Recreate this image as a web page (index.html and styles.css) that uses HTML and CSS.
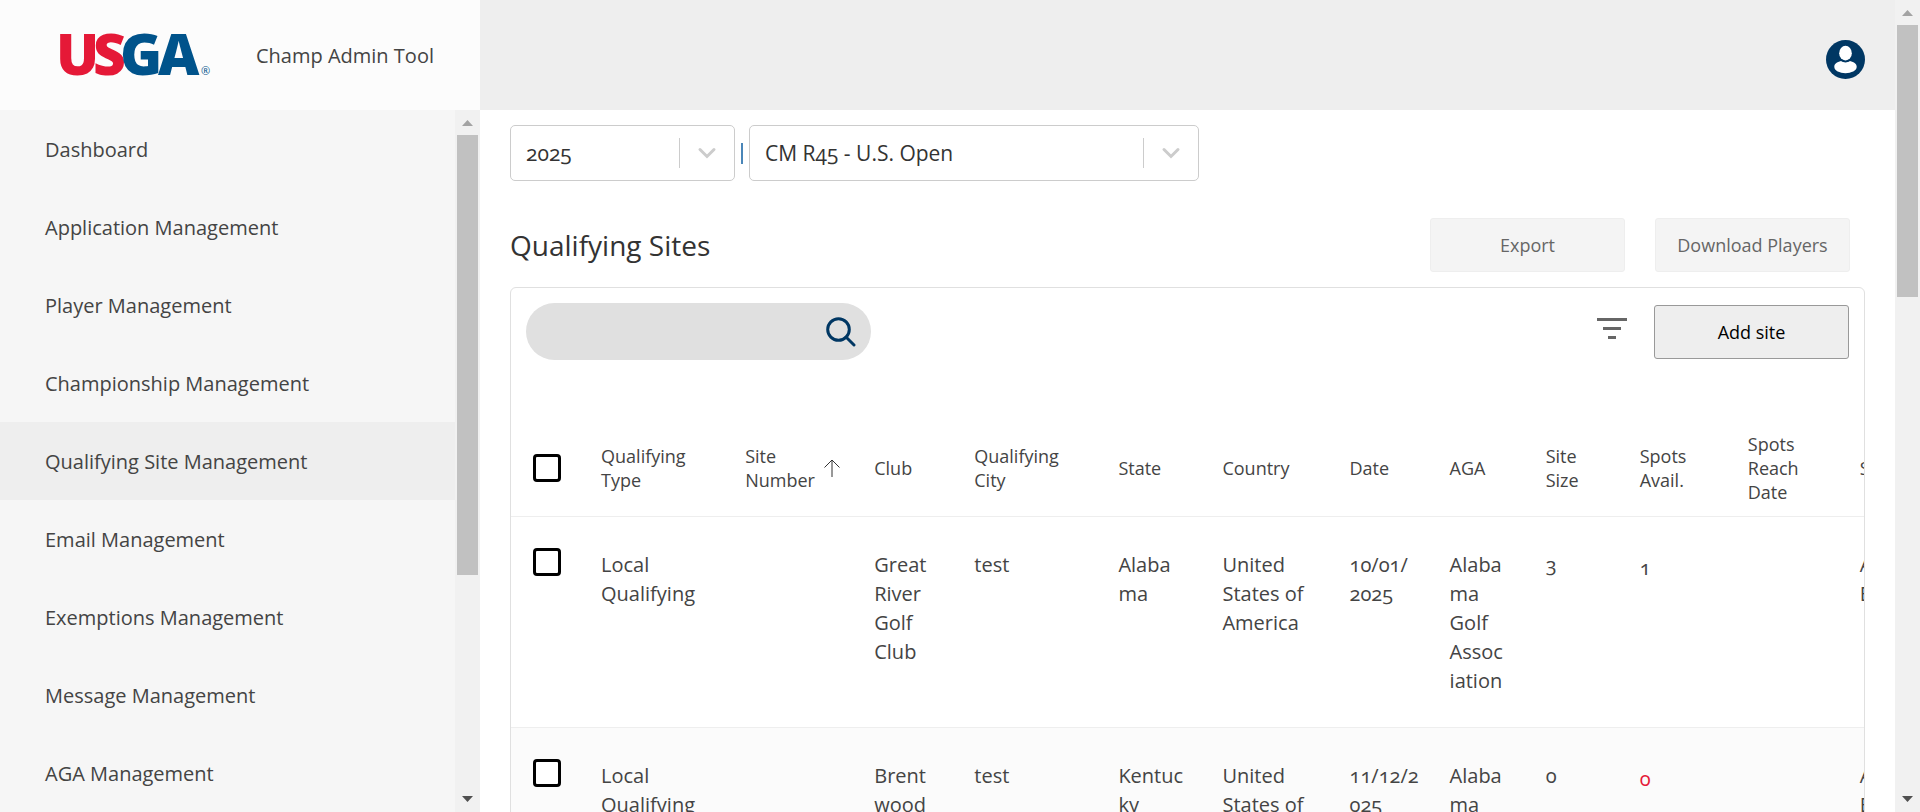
FILE: index.html
```html
<!DOCTYPE html>
<html lang="en">
<head>
<meta charset="utf-8">
<meta name="viewport" content="width=device-width, initial-scale=1">
<title>Champ Admin Tool</title>
<link rel="stylesheet" href="styles.css">
</head>
<body>
<div class="app">
  <aside class="side">
    <div class="brand">
      <svg class="logo" viewBox="0 0 154 46" role="img" aria-label="USGA">
        <text x="-4 33 60 98" y="43"><tspan class="logo-red">US</tspan><tspan class="logo-blue">GA</tspan></text>
        <text class="logo-mark" x="141" y="43">®</text>
      </svg>
      <span class="brand-name">Champ Admin Tool</span>
    </div>
    <div class="side-body">
      <nav class="menu">
        <a href="#">Dashboard</a>
        <a href="#">Application Management</a>
        <a href="#">Player Management</a>
        <a href="#">Championship Management</a>
        <a href="#" class="active" aria-current="page">Qualifying Site Management</a>
        <a href="#">Email Management</a>
        <a href="#">Exemptions Management</a>
        <a href="#">Message Management</a>
        <a href="#">AGA Management</a>
      </nav>
      <div class="scrollbar" aria-hidden="true">
        <svg class="arrow up" viewBox="0 0 25 25"><path d="M7 16L12.500 10L18 16Z"/></svg>
        <div class="track"><div class="thumb thumb-side"></div></div>
        <svg class="arrow" viewBox="0 0 25 25"><path d="M7 9L18 9L12.500 15Z"/></svg>
      </div>
    </div>
  </aside>

  <div class="page">
    <header class="topbar">
      <button class="account" aria-label="Account">
        <svg viewBox="0 0 40 40"><circle cx="20" cy="20" r="20" fill="#003763"/><path d="M15.500 21.500C11 22.500 8.500 24.500 8.500 27.500C8.500 31.500 14 34 20 34S31.500 31.500 31.500 27.500C31.500 24.500 29 22.500 24.500 21.500C22 23.500 18 23.500 15.500 21.500Z" fill="#fff"/><ellipse cx="20" cy="13.500" rx="6.500" ry="7.500" fill="#fff"/></svg>
      </button>
    </header>
    <main class="content">
      <div class="filters">
        <div class="picker picker-year">
          <select aria-label="Year"><option>2025</option></select>
          <span class="rule"></span>
          <svg class="chevron" viewBox="0 0 20 20"><path d="M3 6.500L10 13.500L17 6.500"/></svg>
        </div>
        <span class="divider"></span>
        <div class="picker picker-event">
          <select aria-label="Championship"><option>CM R45 - U.S. Open</option></select>
          <span class="rule"></span>
          <svg class="chevron" viewBox="0 0 20 20"><path d="M3 6.500L10 13.500L17 6.500"/></svg>
        </div>
      </div>

      <div class="heading">
        <h1>Qualifying Sites</h1>
        <button class="btn" disabled>Export</button>
        <button class="btn" disabled>Download Players</button>
      </div>

      <section class="card">
        <div class="tools">
          <div class="search">
            <input type="text" aria-label="Search">
            <button aria-label="Search"><svg viewBox="0 0 30 30"><circle cx="12.500" cy="12.500" r="10.800"/><path d="M20 20L28 28"/></svg></button>
          </div>
          <button class="filter" aria-label="Filter"><svg viewBox="0 0 30 21"><path d="M0 1.500H30M6 10.500H24M11 19.500H19"/></svg></button>
          <button class="btn primary">Add site</button>
        </div>
        <table class="sites">
          <colgroup>
            <col class="w-check"><col class="w-144"><col class="w-129"><col class="w-100"><col class="w-144"><col class="w-104"><col class="w-127"><col class="w-100"><col class="w-96"><col class="w-94"><col class="w-108"><col class="w-112"><col class="w-144">
          </colgroup>
          <thead>
            <tr>
              <th><input type="checkbox" aria-label="Select all"></th>
              <th>Qualifying<br>Type</th>
              <th><span class="sorted"><span>Site<br>Number</span><svg viewBox="0 0 18 20"><path d="M9 19V2M1.500 9.500L9 2L16.500 9.500"/></svg></span></th>
              <th>Club</th><th>Qualifying<br>City</th><th>State</th><th>Country</th><th>Date</th><th>AGA</th>
              <th>Site<br>Size</th><th>Spots<br>Avail.</th><th>Spots<br>Reach<br>Date</th><th>Status</th>
            </tr>
          </thead>
          <tbody>
            <tr>
              <td><input type="checkbox" aria-label="Select Great River Golf Club"></td>
              <td>Local<br>Qualifying</td><td></td><td>Great<br>River<br>Golf<br>Club</td><td>test</td><td>Alaba<br>ma</td>
              <td>United<br>States of<br>America</td><td>10/01/<br>2025</td><td>Alaba<br>ma<br>Golf<br>Assoc<br>iation</td>
              <td>3</td><td class="spots">1</td><td></td><td>Accept<br>Entries</td>
            </tr>
            <tr>
              <td><input type="checkbox" aria-label="Select Brentwood"></td>
              <td>Local<br>Qualifying</td><td></td><td>Brent<br>wood</td><td>test</td><td>Kentuc<br>ky</td>
              <td>United<br>States of<br>America</td><td>11/12/2<br>025</td><td>Alaba<br>ma<br>Golf<br>Assoc<br>iation</td>
              <td>0</td><td class="spots none">0</td><td></td><td>Accept<br>Entries</td>
            </tr>
          </tbody>
        </table>
      </section>
    </main>
  </div>

  <div class="scrollbar" aria-hidden="true">
    <svg class="arrow up" viewBox="0 0 25 25"><path d="M7 16L12.500 10L18 16Z"/></svg>
    <div class="track"><div class="thumb thumb-page"></div></div>
    <svg class="arrow" viewBox="0 0 25 25"><path d="M7 9L18 9L12.500 15Z"/></svg>
  </div>
</div>
</body>
</html>
```
FILE: styles.css
```css
*, *::before, *::after { box-sizing: border-box; }
body {
  margin: 0;
  font-family: "Open Sans", "Noto Sans", sans-serif;
  font-size: 20px;
  font-variant-numeric: oldstyle-nums;
  color: #444;
  background: #fff;
}
button, input, select { font: inherit; font-variant-numeric: inherit; color: inherit; }
button { cursor: pointer; }

.app { display: flex; height: 100vh; overflow: hidden; }

/* Sidebar */
.side { flex: 0 0 25%; display: flex; flex-direction: column; }
.brand {
  flex: none;
  height: 110px;
  display: flex;
  align-items: center;
  gap: 42px;
  padding-left: 60px;
  background: #fcfcfc;
}
.logo { width: 154px; height: 46px; overflow: visible; font-weight: 800; font-size: 57px; }
.logo-red { fill: #e51937; }
.logo-blue { fill: #00538b; }
.logo-mark { fill: #00538b; font-size: 11px; font-weight: 400; }
.side-body { flex: 1; min-height: 0; display: flex; background: #f6f6f6; }
.menu { flex: 1; overflow: hidden; }
.menu a {
  display: flex;
  align-items: center;
  height: 78px;
  padding-left: 45px;
  color: inherit;
  text-decoration: none;
}
.menu a.active { background: #eee; }

/* Scrollbars */
.scrollbar { flex: 0 0 25px; display: flex; flex-direction: column; background: #f1f1f1; }
.scrollbar .track { flex: 1; padding: 0 2px; }
.thumb { background: #c1c1c1; }
.thumb-side { height: 67.5%; }
.thumb-page { height: 35.7%; }
.arrow { width: 25px; height: 25px; fill: #505050; }
.arrow.up { fill: #a3a3a3; }

/* Page */
.page { flex: 1; min-width: 0; display: flex; flex-direction: column; }
.topbar {
  flex: none;
  height: 110px;
  display: flex;
  align-items: center;
  justify-content: flex-end;
  padding: 8px 30px 0;
  background: #eee;
}
.account { width: 39px; height: 39px; padding: 0; border: 0; background: none; }
.account svg { display: block; }
.content { flex: 1; min-height: 0; padding: 15px 30px 0; overflow: hidden; }

.filters { display: flex; align-items: center; }
.picker {
  display: flex;
  align-items: center;
  height: 56px;
  border: 1px solid #ccc;
  border-radius: 5px;
  background: #fff;
  color: #333;
  font-size: 21px;
}
.picker-year { width: 225px; }
.picker-event { width: 450px; }
.picker select {
  flex: 1;
  min-width: 0;
  height: 100%;
  padding: 0 0 0 15px;
  border: 0;
  background: none;
  appearance: none;
}
.rule { width: 1px; height: 30px; background: #ccc; }
.chevron { width: 20px; height: 20px; margin: 0 17px; fill: none; stroke: #ccc; stroke-width: 3; stroke-linecap: round; }
.divider { width: 2px; height: 21px; margin: 0 6px; background: #4a86b8; }

.heading { display: flex; align-items: center; gap: 30px; padding: 37px 15px 15px 0; }
.heading h1 { flex: 1; margin: 0; font-size: 28px; font-weight: 400; color: #333; }
.btn {
  width: 195px;
  height: 54px;
  padding: 0;
  border: 1px solid #eee;
  border-radius: 3px;
  background: #f4f4f4;
  color: #666;
  font-size: 18px;
}
.btn.primary { border-color: #999; background: #eee; color: #000; }

.card { border: 1px solid #e0e0e0; border-radius: 6px 6px 0 0; overflow: hidden; height: 100%; }
.tools { display: flex; align-items: center; padding: 15px; }
.search {
  display: flex;
  align-items: center;
  width: 345px;
  height: 57px;
  margin-right: auto;
  padding: 0 15px 0 24px;
  border-radius: 29px;
  background: #e0e0e0;
}
.search input { flex: 1; min-width: 0; border: 0; background: none; }
.search button { width: 30px; height: 30px; padding: 0; border: 0; background: none; }
.search svg { display: block; fill: none; stroke: #003763; stroke-width: 3; stroke-linecap: round; }
.filter { width: 30px; height: 27px; margin-right: 27px; padding: 0 0 6px; border: 0; background: none; }
.filter svg { display: block; fill: none; stroke: #666; stroke-width: 3; }

/* Table */
.sites { width: 1493px; margin-top: 45px; table-layout: fixed; border-collapse: collapse; white-space: nowrap; }
.sites th, .sites td { padding: 0; text-align: left; font-weight: 400; border-bottom: 1px solid #eee; }
.sites th { height: 96px; font-size: 18px; line-height: 24px; }
.sites td { padding: 33px 0 32px; line-height: 29px; vertical-align: top; }
.sites tbody tr:nth-child(even) { background: #fbfbfb; }
.sites th:first-child, .sites td:first-child { padding-left: 22px; }
.sites td:first-child { padding-top: 31px; }
.sites td.spots { padding-top: 36px; }
.sites td.none { color: #e51937; }
.sites input {
  display: block;
  width: 28px;
  height: 28px;
  margin: 0;
  appearance: none;
  border: 3px solid #000;
  border-radius: 4px;
  background: #fff;
}
.sorted { display: flex; align-items: center; gap: 8px; }
.sorted svg { width: 18px; height: 20px; fill: none; stroke: #333; stroke-width: 1; }
.w-check { width: 90px; }
.w-94 { width: 94px; }
.w-96 { width: 96px; }
.w-100 { width: 100px; }
.w-104 { width: 104px; }
.w-108 { width: 108px; }
.w-112 { width: 112px; }
.w-127 { width: 127px; }
.w-129 { width: 129px; }
.w-144 { width: 144px; }
```
